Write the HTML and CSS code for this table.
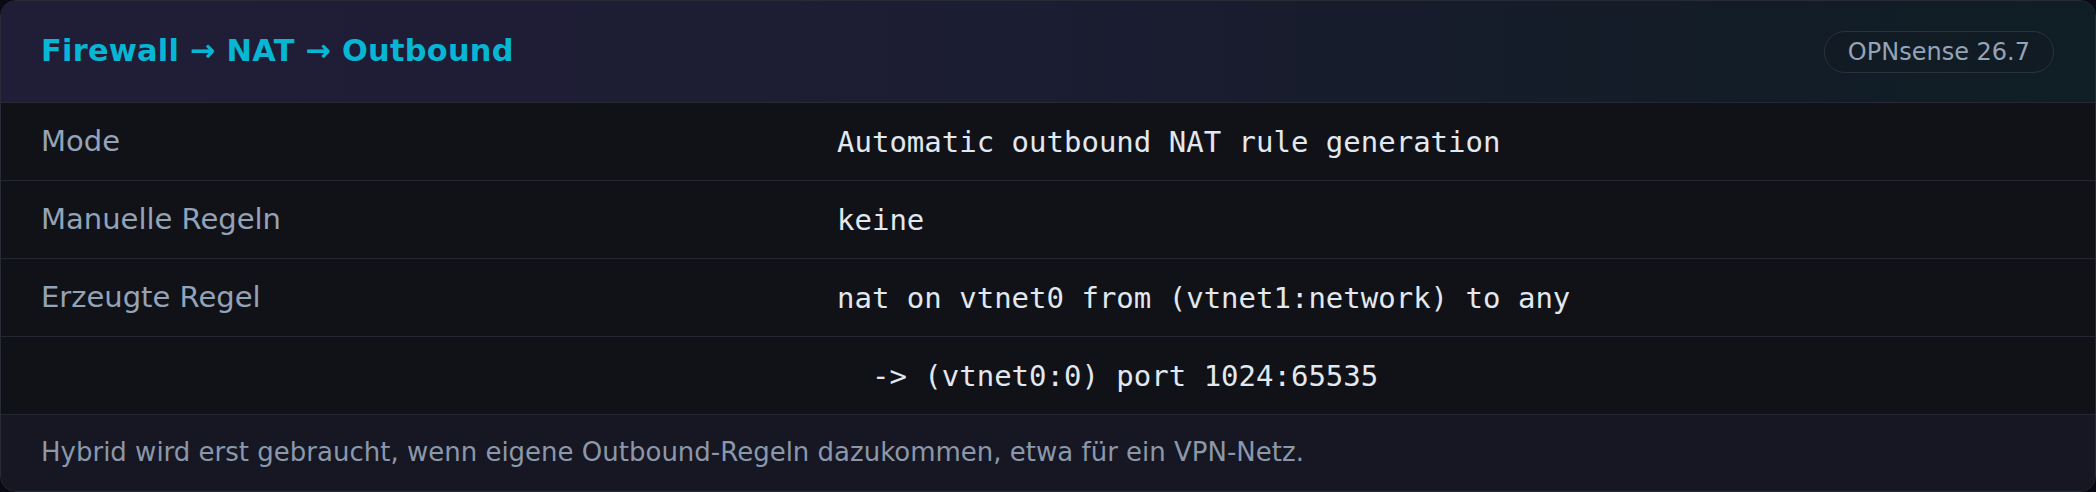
FILE: index.html
```html
<!DOCTYPE html>
<html lang="de">
<head>
<meta charset="utf-8">
<title>Firewall → NAT → Outbound</title>
<link rel="stylesheet" href="styles.css">
</head>
<body>
<div class="card">
  <header class="card-head">
    <h1 class="title">Firewall → NAT → Outbound</h1>
    <span class="badge">OPNsense 26.7</span>
  </header>
  <div class="rows">
    <div class="row">
      <div class="label">Mode</div>
      <div class="value">Automatic outbound NAT rule generation</div>
    </div>
    <div class="row">
      <div class="label">Manuelle Regeln</div>
      <div class="value">keine</div>
    </div>
    <div class="row">
      <div class="label">Erzeugte Regel</div>
      <div class="value">nat on vtnet0 from (vtnet1:network) to any</div>
    </div>
    <div class="row">
      <div class="label"></div>
      <div class="value">  -&gt; (vtnet0:0) port 1024:65535</div>
    </div>
  </div>
  <footer class="card-foot">Hybrid wird erst gebraucht, wenn eigene Outbound-Regeln dazukommen, etwa für ein VPN-Netz.</footer>
</div>
</body>
</html>
```
FILE: styles.css
```css
html, body {
  margin: 0;
  padding: 0;
  background: #0a0a14;
}
body {
  font-family: "DejaVu Sans", "Noto Sans", sans-serif;
  width: 2096px;
  height: 492px;
  overflow: hidden;
}
.card {
  box-sizing: border-box;
  width: 2096px;
  height: 492px;
  border: 1px solid #262b36;
  border-radius: 16px;
  overflow: hidden;
  background: #111217;
  display: flex;
  flex-direction: column;
}
.card-head {
  box-sizing: border-box;
  height: 102px;
  flex: none;
  display: flex;
  align-items: center;
  justify-content: space-between;
  padding: 0 41px 0 40px;
  background: linear-gradient(90deg, #211d38 0%, #1c1d33 45%, #131c27 80%, #0f1e25 100%);
  border-bottom: 1px solid #252a35;
}
.title {
  margin: 0;
  font-size: 30.4px;
  letter-spacing: 0.25px;
  font-weight: 700;
  color: #06b6d4;
  line-height: 1.2;
}
.badge {
  font-size: 24px;
  line-height: 28px;
  color: #94a3b8;
  padding: 6px 23px;
  border: 1px solid #293241;
  border-radius: 999px;
  background: rgba(17, 24, 33, 0.4);
}
.rows {
  display: flex;
  flex-direction: column;
}
.row {
  box-sizing: border-box;
  height: 78px;
  display: grid;
  grid-template-columns: 796px 1fr;
  align-items: center;
  padding: 0 40px;
  border-bottom: 1px solid #232833;
}
.label {
  font-size: 29px;
  color: #94a3b8;
  padding-bottom: 2px;
}
.value {
  font-family: "DejaVu Sans Mono", "Liberation Mono", monospace;
  font-size: 29px;
  color: #e2e8f0;
  white-space: pre;
}
.card-foot {
  flex: 1;
  display: flex;
  align-items: center;
  padding: 0 40px 2px;
  background: #161722;
  font-size: 26px;
  color: #8b97ab;
}
```
